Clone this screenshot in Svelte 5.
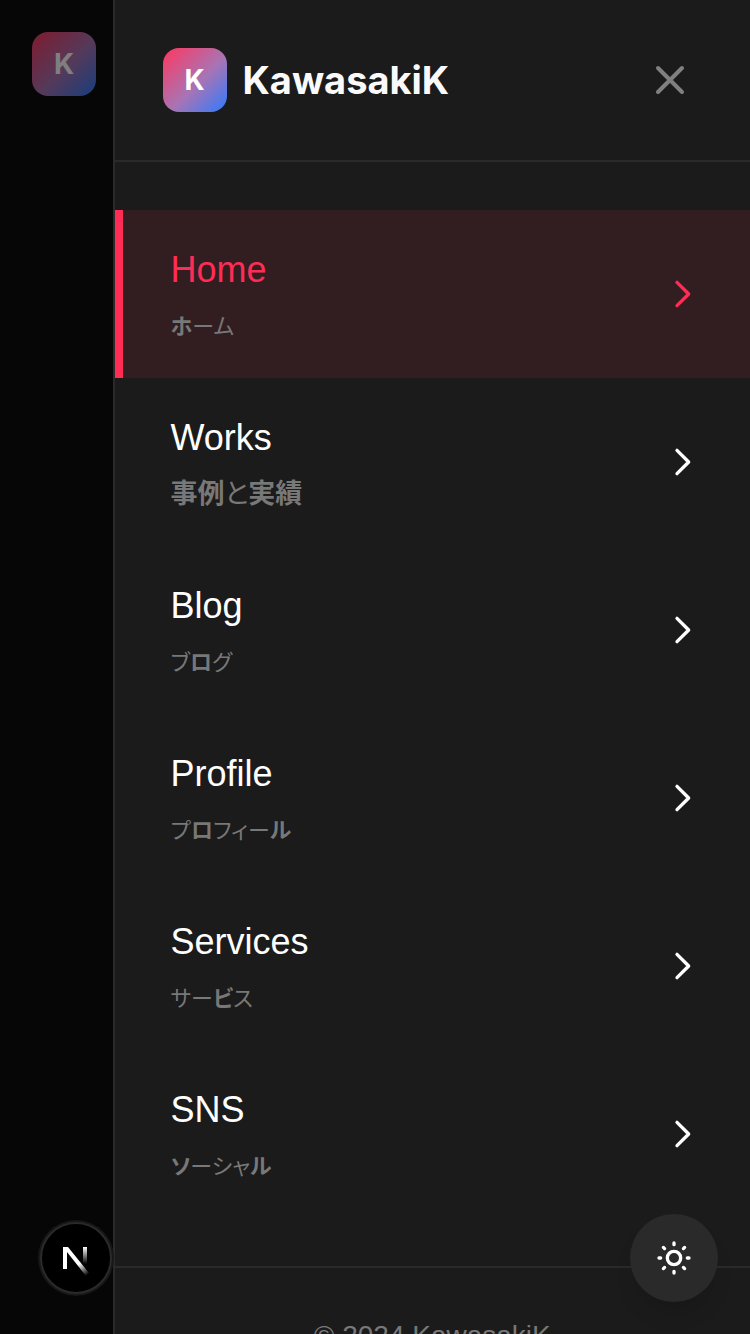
<script>
  const items = [
    { title: 'Home', label: [['ホ', true], ['ーム', false]], active: true },
    { title: 'Works', label: [['事例', true], ['と', false], ['実績', true]], kanji: true },
    { title: 'Blog', label: [['ブ', false], ['ロ', true], ['グ', false]] },
    { title: 'Profile', label: [['プ', false], ['ロ', true], ['フィー', false], ['ル', true]] },
    { title: 'Services', label: [['サー', false], ['ビ', true], ['ス', false]] },
    { title: 'SNS', label: [['ソ', true], ['ーシャ', false], ['ル', true]] }
  ];
</script>

<div class="page">
  <a class="logo" href="#home" aria-label="KawasakiK">K</a>
</div>
<div class="scrim"></div>

<aside class="drawer">
  <header>
    <span class="logo">K</span>
    <span class="brand">KawasakiK</span>
    <button class="close" aria-label="Close menu">
      <svg viewBox="0 0 24 24"><path d="M6 6l12 12M18 6L6 18" /></svg>
    </button>
  </header>
  <nav>
    {#each items as item}
      <a class="item" class:active={item.active} href={'#' + item.title.toLowerCase()}>
        <span class="text">
          <span class="title">{item.title}</span>
          <span class="label" class:kanji={item.kanji} lang="ja">{#each item.label as [part, strong]}<span class:strong>{part}</span>{/each}</span>
        </span>
        <svg class="chevron" viewBox="0 0 24 24"><path d="M9 5l7 7-7 7" /></svg>
      </a>
    {/each}
  </nav>
  <footer>© 2024 KawasakiK</footer>
</aside>

<button class="devtools" aria-label="Open developer tools">
  <svg viewBox="2 2 68 68">
    <defs>
      <linearGradient id="diag" gradientUnits="userSpaceOnUse" x1="40" y1="41" x2="49" y2="52">
        <stop offset="0" stop-color="#fff" />
        <stop offset="1" stop-color="#fff" stop-opacity="0" />
      </linearGradient>
      <linearGradient id="stem" gradientUnits="userSpaceOnUse" x1="0" y1="25" x2="0" y2="42">
        <stop offset="0" stop-color="#fff" />
        <stop offset="1" stop-color="#fff" stop-opacity="0" />
      </linearGradient>
    </defs>
    <path d="M43 25h4v17h-4z" fill="url(#stem)" />
    <path d="M23 25h5L49 51l-3 3L27 30v17h-4z" fill="url(#diag)" />
  </svg>
</button>

<button class="theme" aria-label="Toggle theme">
  <svg viewBox="0 0 24 24">
    <path d="M12 3v1m0 16v1m9-9h-1M4 12H3m15.364 6.364l-.707-.707M6.343 6.343l-.707-.707m12.728 0l-.707.707M6.343 17.657l-.707.707M16 12a4 4 0 11-8 0 4 4 0 018 0z" />
  </svg>
</button>

<style>
  :global(body) {
    margin: 0;
    background: #0d0d0d;
    overflow: hidden;
  }
  * {
    box-sizing: border-box;
  }
  a {
    text-decoration: none;
  }
  button {
    border: 0;
    padding: 0;
    cursor: pointer;
    display: grid;
    place-items: center;
  }
  svg {
    display: block;
    fill: none;
    stroke: currentColor;
    stroke-width: 2;
    stroke-linecap: round;
    stroke-linejoin: round;
  }
  .page {
    height: 100vh;
    padding: 32px;
  }
  .scrim {
    position: fixed;
    inset: 0;
    background: rgb(0 0 0 / 50%);
  }
  .logo {
    display: grid;
    place-items: center;
    width: 64px;
    height: 64px;
    border-radius: 16px;
    background: linear-gradient(135deg, #ff375f, #a874b4 55%, #2f7bff);
    color: #fff;
    font: 700 28px/40px Inter, sans-serif;
  }
  .drawer {
    position: fixed;
    inset: 0 0 0 auto;
    width: 85%;
    overflow-y: auto;
    scrollbar-width: none;
    background: #1b1b1b;
    border-left: 2px solid #2a2a2a;
    color: #fafafa;
    font-family: 'Liberation Sans', Arial, sans-serif;
  }
  header {
    display: flex;
    align-items: center;
    gap: 16px;
    padding: 48px;
    border-bottom: 2px solid #2a2a2a;
  }
  .brand {
    font: 700 38px/56px Inter, sans-serif;
  }
  .close {
    width: 64px;
    height: 64px;
    margin-left: auto;
    background: none;
    color: #808080;
  }
  .close svg {
    width: 48px;
  }
  nav {
    padding: 48px 0;
  }
  .item {
    display: flex;
    align-items: center;
    justify-content: space-between;
    padding: 32px 48px;
    border-left: 8px solid transparent;
    color: #fff;
  }
  .item.active {
    border-color: #ff2d55;
    background: #321e21;
    color: #ff2d55;
  }
  .text {
    display: grid;
    gap: 8px;
  }
  .title {
    font-size: 36px;
    line-height: 56px;
  }
  .label {
    padding-bottom: 4px;
    color: #787878;
    font-family: 'Noto Sans CJK JP', sans-serif;
    font-size: 22px;
    line-height: 36px;
    font-weight: 400;
    font-feature-settings: 'palt';
  }
  .label.kanji {
    font-size: 27px;
  }
  .strong {
    font-weight: 700;
  }
  .chevron {
    width: 40px;
  }
  footer {
    padding: 48px;
    border-top: 2px solid #2a2a2a;
    color: #787878;
    font-size: 28px;
    line-height: 40px;
    text-align: center;
  }
  .devtools {
    position: fixed;
    left: 40px;
    bottom: 40px;
    width: 72px;
    height: 72px;
    border: 2px solid #2a2a2a;
    border-radius: 50%;
    background: #000;
    box-shadow: 0 0 0 2px #171717;
  }
  .devtools svg {
    width: 68px;
    stroke: none;
  }
  .theme {
    position: fixed;
    right: 32px;
    bottom: 32px;
    width: 88px;
    height: 88px;
    border-radius: 50%;
    background: #2a2a2a;
    color: #fff;
    box-shadow: 0 16px 24px -8px rgb(0 0 0 / 15%);
  }
  .theme svg {
    width: 40px;
  }
</style>
